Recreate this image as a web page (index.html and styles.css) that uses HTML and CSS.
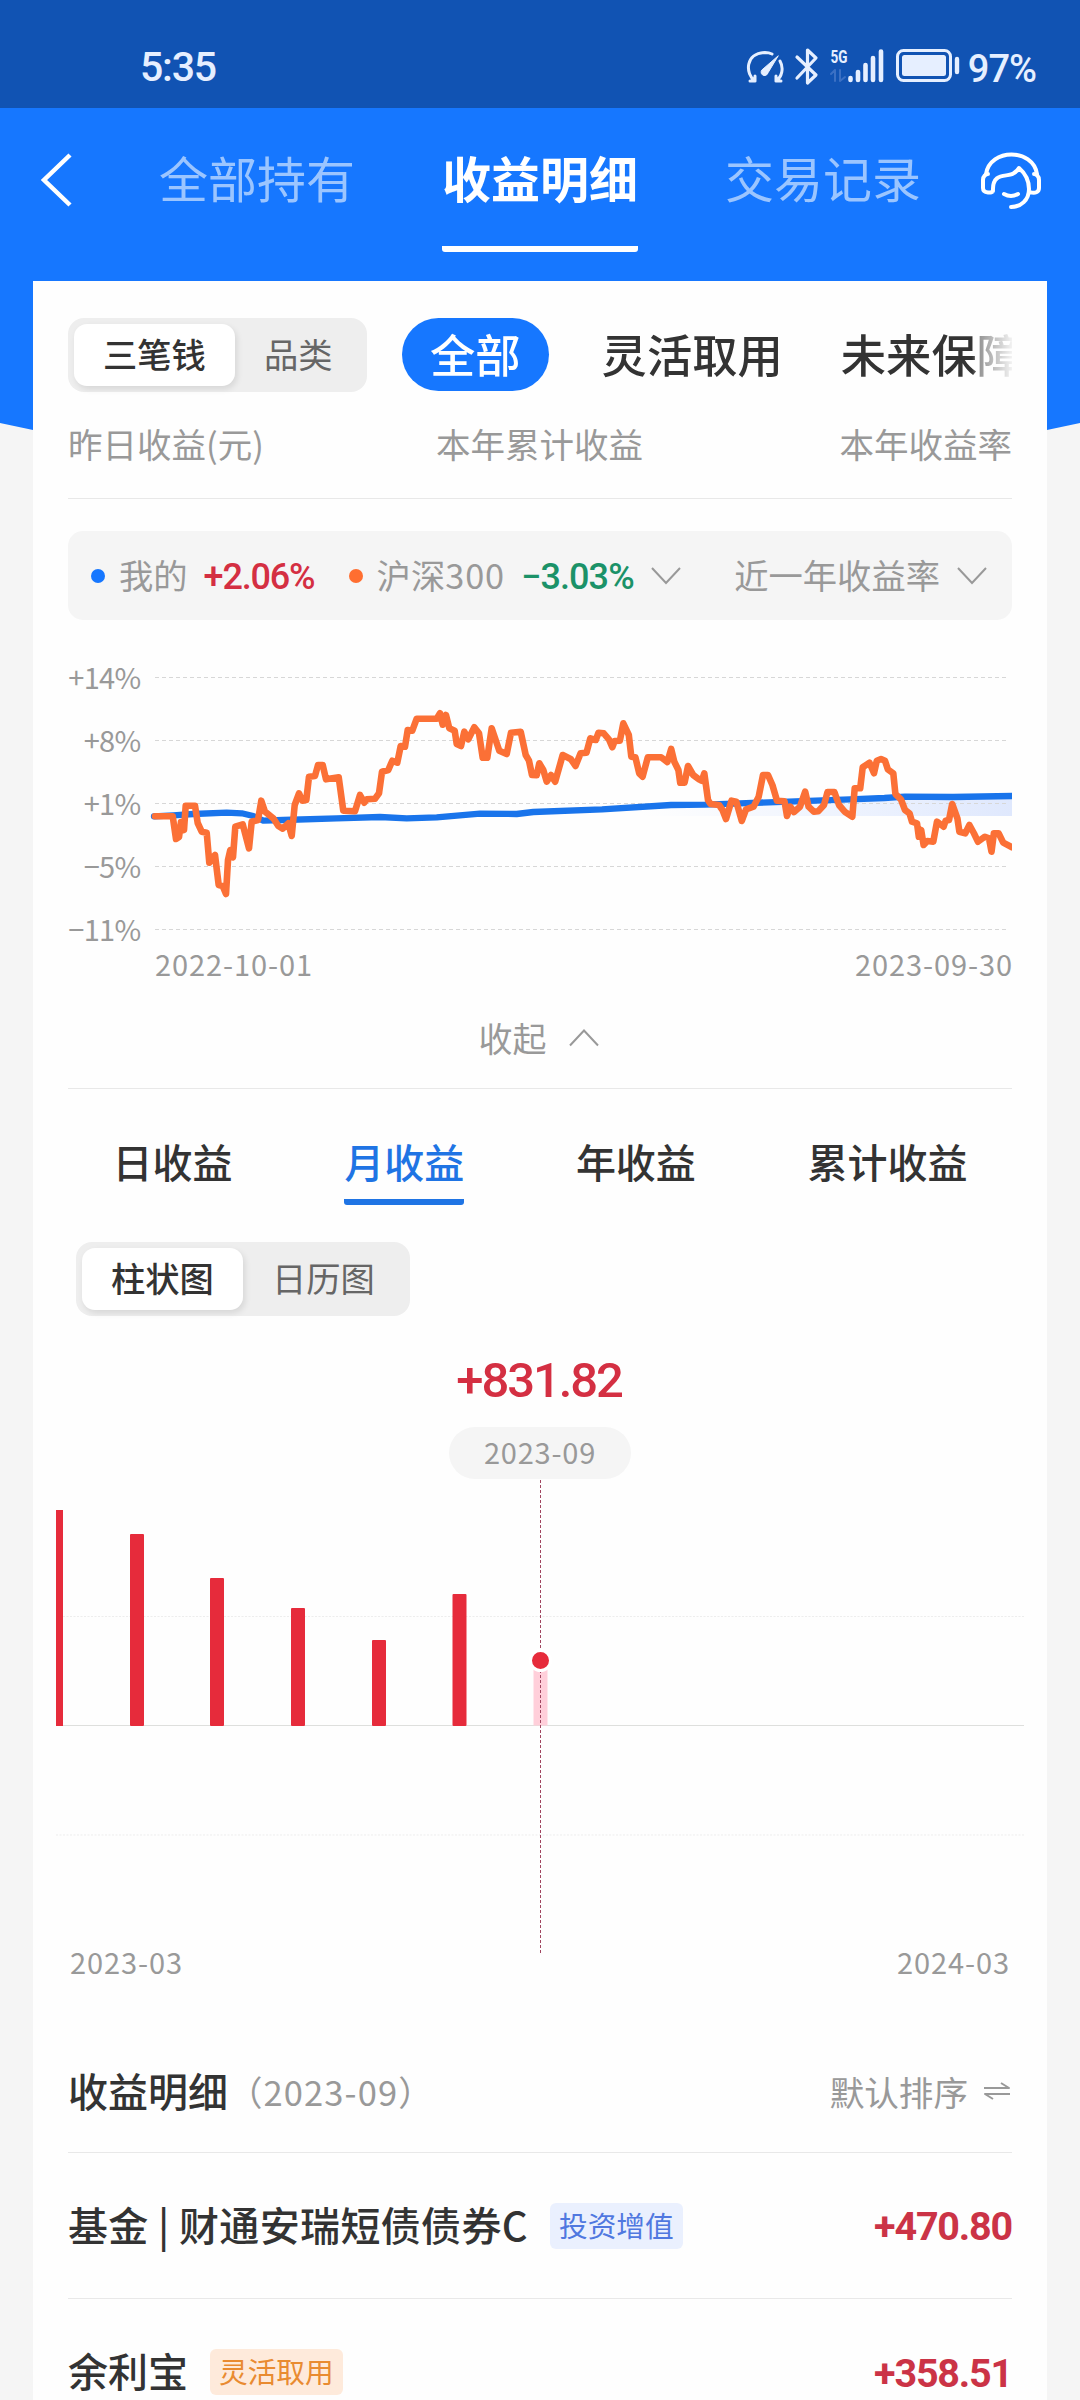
FILE: index.html
```html
<!DOCTYPE html>
<html lang="zh-CN">
<head>
<meta charset="utf-8">
<title>收益明细</title>
<link rel="stylesheet" href="styles.css">
</head>
<body>
<div class="page">
  <header class="top">
    <div class="status">
      <span class="clock">5:35</span>
      <svg class="status-icons" viewBox="740 40 222 50" width="222" height="50" fill="none" stroke="#e6efff" stroke-linecap="round" stroke-linejoin="round">
        <path d="M754 81 C744 74 744 53 764 52.500 C767 52.500 769 53 771 54 M779 61 C783 68 781 77 775 81 M754 81V76 M754 81h-5 M775 81V76 M775 81h5" stroke-width="3"/>
        <path d="M777 56 L762 69 A3.500 3.500 0 1 0 767 73 Z" fill="#e6efff" stroke-width="1"/>
        <path d="M796 57 L815 75 L806.500 83 V50 L815 58 L796 78" stroke-width="3.200"/>
        <text class="net" x="829.500" y="62.500" textLength="17" lengthAdjust="spacingAndGlyphs">5G</text>
        <path d="M830 74 L834 70 V81 M839 70 V81 L844 77" stroke="#3b70c4" stroke-width="2"/>
        <path d="M849.500 78V80 M857 72V80 M864.500 65V80 M872 58V80 M880 51.500V80" stroke-width="4.600"/>
        <rect x="896.500" y="50.500" width="53" height="30" rx="6" stroke-width="3"/>
        <rect x="901" y="55" width="44" height="21" rx="2.500" fill="#e6efff" stroke="none"/>
        <path d="M956 59V72" stroke-width="4.400"/>
      </svg>
      <span class="battery">97%</span>
    </div>
    <nav class="nav">
      <svg class="back" viewBox="0 0 36 60" width="36" height="60"><path d="M34 5 L8 30 L34 55" fill="none" stroke="#fff" stroke-width="4.500"/></svg>
      <div class="nav-tabs">
        <span class="nav-tab">全部持有</span>
        <span class="nav-tab nav-on">收益明细</span>
        <span class="nav-tab">交易记录</span>
      </div>
      <svg class="service" viewBox="978 149 66 62" width="66" height="62" fill="none" stroke="#fff" stroke-width="4" stroke-linecap="round" stroke-linejoin="round">
        <path d="M986 173 C990 147 1033 147 1037 173"/>
        <path d="M993 190 C993 192 983 193 983 187 V179 C983 175 986 173 988 173 M993 190 C992 170 1008 177 1014 172 C1017 170 1018 169 1019 167 C1026 173 1029 180 1029 188 C1029 199 1021 206 1011 206 M1030 191 C1035 193 1039 191 1039 187 V179 C1039 175 1036 173 1034 173"/>
        <path d="M1004 193 Q1011 197 1018 193"/>
      </svg>
    </nav>
  </header>

  <main class="card">
    <div class="filters">
      <div class="segment"><span class="seg seg-on">三笔钱</span><span class="seg">品类</span></div>
      <div class="chips"><span class="chip chip-on">全部</span><span class="chip">灵活取用</span><span class="chip">未来保障</span></div>
    </div>
    <div class="stats"><span>昨日收益(元)</span><span>本年累计收益</span><span>本年收益率</span></div>

    <div class="legend">
      <i class="dot dot-mine"></i><span class="name">我的</span><b class="rate up">+2.06%</b>
      <i class="dot dot-index"></i><span class="name">沪深<span class="wide">300</span></span><b class="rate down">−3.03%</b>
      <svg class="arrow" viewBox="0 0 30 18" width="30" height="18"><path d="M1 1 L15 16 L29 1"/></svg>
      <span class="period">近一年收益率</span>
      <svg class="arrow" viewBox="0 0 30 18" width="30" height="18"><path d="M1 1 L15 16 L29 1"/></svg>
    </div>

    <svg class="trend" viewBox="68 620 944 370" width="944" height="370">
      <defs>
        <linearGradient id="fade" x1="0" x2="1" y1="0" y2="0"><stop offset="0" stop-color="#e3ecff" stop-opacity="0"/><stop offset="1" stop-color="#dfe8fd"/></linearGradient>
      </defs>
      <path d="M640 807 L739 803 L850 799 L905 797 H1012 V816 H640Z" fill="url(#fade)"/>
      <path class="rule" d="M155 677.500H1008 M155 740.500H1008 M155 803.500H1008 M155 866.500H1008 M155 929.500H1008"/>
      <g class="axis" text-anchor="end">
        <text x="140.500" y="689">+14%</text><text x="140.500" y="752">+8%</text><text x="140.500" y="815">+1%</text><text x="140.500" y="878">−5%</text><text x="140.500" y="941">−11%</text>
      </g>
      <g class="axis dates"><text x="155" y="976">2022-10-01</text><text x="1013" y="976" text-anchor="end">2023-09-30</text></g>
      <polyline class="line mine" points="154,816.3 173.300,815.3 193.300,814 226.700,812.7 241.700,813.3 253.300,816 263.300,820.7 283.300,820 336.700,818.3 380,817 406.700,818.3 436.700,817.3 480,813.7 516.700,814 533.300,812 602,809.3 671,805 705,804.7 740,803.3 815.500,800.7 850,799.3 884.400,798 905,796.7 953,797 1012,796"/>
      <polyline class="line index" points="155,816.3 172.7,816.3 176,839 179,837 181,822 184,830 185.7,805.7 195,805.7 197.7,823 201.7,831.7 206.7,832.7 209.3,862.7 215,855 218.7,885 222.7,886 226,894 228,860 230.3,850 233,857.3 235.3,826.7 242.7,824.3 249,848.3 251.7,821.7 258,820 261.3,800.7 265,811.7 273.3,818.3 278.3,826 282.7,828.7 288.3,823.3 291.7,836 294.7,805 299,793.3 302.3,800.7 306.3,800 309,776.7 315,776 318,765 322.7,765 326,779.3 338.7,777.3 343.3,810.7 355,811.3 360,795 364.3,802.7 366.7,799.3 375,798.7 379,793.3 382,771.7 388.3,770 392.3,760.7 397.3,762.7 400.7,746 405,746.7 407.7,730 412.3,730.7 416.7,718.7 436.7,718.7 440,713.3 442.7,724.7 446,715 449.3,728.3 454.7,730.7 456.7,744 461,746 464.3,731.7 468.3,739.3 474.3,727.3 479,733.3 482.7,757.7 487.3,757.7 491.7,728.3 499.3,750.7 506.7,754 511,732.7 520.7,731.7 525.7,755 529,760.7 532,775 536.7,775.3 539.3,763.3 543.3,770 546.7,781.7 551,775 555.2,781.7 562.7,755 571,759.3 575.5,766 580.6,753.3 586.5,752.7 590.3,738.3 595.8,740 598.5,732.7 603.7,733.3 608.9,739.3 612.3,747.3 614.7,741 619.9,740.7 623.3,723.3 628.8,735 631.3,756.7 635.4,757.3 639.2,773.3 642.6,776.7 647.8,757.3 661.2,757.3 667.4,762 671.2,749 674.3,761.7 678.4,770 680.2,782.7 684.6,782.7 688,766 693.2,775 699,779.3 701.8,780.7 704.3,773.3 708,800 710.5,804 719,805 722.5,810 726,819 731.5,800.7 736.3,801.7 741.8,821 746,809.3 753.5,806.7 758.7,796.7 763,775 768,775 772.4,785 777,800.7 784.5,801.3 787,816 790.3,806.7 794,812 800,806.7 805.2,791.7 808.6,806.7 813.8,811.7 818.2,811.3 824,805 827.5,792 834.4,792 839,805 844.7,811.7 852.3,816.7 854.7,788.3 860.2,788.3 862.7,767.3 869.5,762.7 874,773.3 876.8,760.7 881,759 885,760.7 887.8,769.3 893.3,773.3 895.4,794 900.9,799.3 905,810 909.5,813.3 912,821.7 917,823.3 918.8,836.7 921.2,830 923.6,845 927.4,841 933.3,841.7 937,821.7 943.6,826.7 945.6,820.7 949,820 952.2,804 957.4,818.3 959.4,831.7 965.3,833.3 969.4,825 973.9,833.3 978,841.7 984.9,836.7 989,838.3 991.5,851.7 993.9,833.3 998.7,833.3 1003.2,842.7 1012,847.3"/>
    </svg>

    <div class="collapse"><span>收起</span><svg class="arrow" viewBox="0 0 30 18" width="30" height="18"><path d="M1 16.500 L15 1.500 L29 16.500"/></svg></div>

    <div class="tabs"><span class="tab">日收益</span><span class="tab tab-on">月收益</span><span class="tab">年收益</span><span class="tab">累计收益</span></div>
    <div class="segment chart-kind"><span class="seg seg-on">柱状图</span><span class="seg">日历图</span></div>

    <div class="month-value">+831.82</div>
    <div class="month-pill">2023-09</div>
    <svg class="bars" viewBox="33 1479 1014 511" width="1014" height="511">
      <path d="M56 1616.500H1024 M56 1835H1024" stroke="#ededed" stroke-dasharray="2 1.500"/>
      <path d="M56 1725.500H1024" stroke="#dedfdd"/>
      <g fill="#e62b3b">
        <rect x="56" y="1510" width="7" height="216"/>
        <rect x="130" y="1534" width="14" height="192" rx="1"/>
        <rect x="210" y="1578" width="14" height="148" rx="1"/>
        <rect x="291" y="1608" width="14" height="118" rx="1"/>
        <rect x="372" y="1640" width="14" height="86" rx="1"/>
        <rect x="452.500" y="1594" width="14" height="132" rx="1"/>
      </g>
      <rect x="533.500" y="1660" width="14" height="65.500" fill="#ffcfda"/>
      <path d="M540.500 1480V1955" stroke="#a04560" stroke-dasharray="3 2"/>
      <circle cx="540.500" cy="1660.500" r="10" fill="#e62b3b" stroke="#fff" stroke-width="3"/>
      <g class="axis dates"><text x="70" y="1974">2023-03</text><text x="1010" y="1974" text-anchor="end">2024-03</text></g>
    </svg>

    <div class="detail-head">
      <span class="title">收益明细</span><span class="month">（2023-09）</span>
      <span class="sort">默认排序</span>
      <svg class="swap" viewBox="0 0 28 20" width="28" height="20"><path d="M1 7H26L18 2 M27 13H2L10 18"/></svg>
    </div>
    <div class="item"><span class="title fund">基金 | 财通安瑞短债债券C</span><span class="tag tag-blue">投资增值</span><b class="amount">+470.80</b></div>
    <div class="item item-last"><span class="title">余利宝</span><span class="tag tag-orange">灵活取用</span><b class="amount">+358.51</b></div>
  </main>
</div>
</body>
</html>
```
FILE: styles.css
```css
* { box-sizing: border-box; }
html, body { margin: 0; height: 2400px; overflow: hidden; }
body {
  width: 1080px;
  background: #f5f5f5;
  color: #333;
  font-family: "Noto Sans CJK SC", sans-serif;
  white-space: nowrap;
}
.page {
  display: flex;
  flex-direction: column;
  height: 2400px;
  overflow: hidden;
  background: linear-gradient(#1677ff, #1677ff) top / 100% 281px no-repeat;
}
.top { height: 281px; flex: none; }
.page::before {
  content: "";
  order: 1;
  height: 180px;
  margin-bottom: -180px;
  flex: none;
  background: #1677ff;
  clip-path: polygon(0 0, 100% 0, 100% 142px, 1047px 149px, 540px 180px, 33px 149px, 0 142px);
}
.status {
  height: 108px;
  padding: 0 44px 0 140px;
  display: flex;
  align-items: center;
  background: #1153b3;
  color: #e6efff;
  font: 400 40px/1 Roboto, sans-serif;
}
.clock { padding-top: 27px; font-size: 41px; font-weight: 500; letter-spacing: -1.200px; }
.status-icons { margin: 21px 5px 0 auto; }
.net { font: 700 17.500px Roboto, sans-serif; fill: #e6efff; stroke: none; }
.battery { padding-top: 29px; font-size: 38px; font-weight: 500; letter-spacing: -1px; }

.nav { height: 173px; display: flex; padding: 42px 36px 0 36px; }
.nav-tabs { flex: 1; display: flex; gap: 87px; padding-left: 87px; }
.nav-tab { width: 196px; height: 102px; font-size: 49px; line-height: 54px; color: #9bc5ff; }
.nav-on { color: #fff; font-weight: 700; border-bottom: 6px solid #fff; border-radius: 3px; }

.card {
  order: 2;
  position: relative;
  width: 1014px;
  height: 2119px;
  flex: none;
  margin-left: 33px;
  padding: 37px 35px 0;
  overflow: hidden;
  background: #fefefe;
}
.filters { display: flex; height: 73px; }
.segment {
  display: flex;
  height: 74px;
  padding: 6px;
  border-radius: 16px;
  background: #eee;
  font-size: 34.300px;
  line-height: 58px;
  color: #666;
}
.seg { padding: 0 28.500px 0 29px; }
.seg-on {
  width: 161px;
  border-radius: 13px;
  background: #fff;
  color: #333;
  font-weight: 500;
  box-shadow: 2px 3px 6px rgba(0, 0, 0, 0.1);
}
.filters .segment { width: 299px; flex: none; }
.chips {
  flex: 1;
  display: flex;
  margin-left: 35px;
  overflow: hidden;
  font-size: 45.300px;
  font-weight: 500;
  line-height: 71px;
  mask-image: linear-gradient(90deg, #000 570px, rgba(0, 0, 0, 0.5) 578px, transparent 614px);
}
.chip { flex: none; margin-right: 58px; }
.chip-on { margin-right: 53px; padding: 0 28px; border-radius: 37px; background: #1677ff; color: #fff; }
.stats {
  display: grid;
  grid-template-columns: 368px 1fr auto;
  height: 108px;
  border-bottom: 1px solid #e8e8e8;
  font-size: 34.500px;
  line-height: 105px;
  color: #999;
}
.legend {
  display: flex;
  align-items: center;
  height: 89px;
  margin-top: 32px;
  padding: 0 25px 0 23px;
  border-radius: 15px;
  background: #f5f5f5;
  color: #999;
  font-size: 34.300px;
  line-height: 86px;
}
.name { margin-left: 14px; padding-bottom: 3px; }
.wide { letter-spacing: 0.900px; }
.period { margin-left: auto; padding-bottom: 3px; }
.dot { width: 14px; height: 14px; border-radius: 50%; }
.dot-mine { background: #1677ff; }
.dot-index { margin-left: 36px; background: #ff6e30; }
.rate {
  width: 109px;
  margin-left: 16px;
  font: 500 36px/89px Roboto, sans-serif;
  letter-spacing: -1.200px;
  padding-top: 3px;
}
.up { color: #d42f42; }
.down { color: #1b9268; letter-spacing: -0.900px; }
.arrow { fill: none; stroke: #999; stroke-width: 2; }
.rate + .arrow { margin-left: 21px; }
.period + .arrow { margin-left: 17px; }

.trend { display: block; overflow: hidden; }
.rule { stroke: #d7d7d7; stroke-width: 1; stroke-dasharray: 4 3; }
.axis { font-size: 29px; fill: #999; letter-spacing: -0.700px; }
.dates { letter-spacing: 0.900px; }
.line { fill: none; stroke-linecap: round; stroke-linejoin: round; stroke-width: 6.600; }
.mine { stroke: #1974eb; stroke-width: 6.300; }
.index { stroke: #fb7036; }

.collapse {
  display: flex;
  align-items: center;
  justify-content: center;
  gap: 22px;
  height: 99px;
  padding: 0 3px 2px 0;
  border-bottom: 1px solid #e8e8e8;
  color: #999;
  font-size: 34px;
  line-height: 92px;
}
.tabs {
  display: flex;
  gap: 111.700px;
  height: 153px;
  padding: 43px 0 0 44.500px;
  font-size: 40px;
  font-weight: 500;
  line-height: 58px;
}
.tab { height: 73px; }
.tab-on { color: #1f74e4; border-bottom: 6px solid #1f74e4; border-radius: 3px; }
.chart-kind { width: 334px; margin-left: 8px; }
.month-value {
  height: 111px;
  padding: 36px 2px 0 0;
  text-align: center;
  color: #d42f42;
  font: 500 49px/58px Roboto, sans-serif;
  letter-spacing: -2.100px;
}
.month-pill {
  width: 182px;
  height: 52px;
  margin: 0 auto;
  border-radius: 26px;
  background: #f5f5f5;
  color: #999;
  font-size: 29px;
  line-height: 49px;
  letter-spacing: 0.800px;
  text-align: center;
}
.bars { display: block; margin: 0 -35px; }
.detail-head, .item { display: flex; align-items: center; border-bottom: 1px solid #e8e8e8; }
.detail-head { height: 121px; margin-top: 42px; padding-bottom: 4px; }
.title { font-size: 40px; font-weight: 500; line-height: 58px; }
.fund { letter-spacing: 0.350px; }
.month { padding-top: 2px; font-size: 34.500px; letter-spacing: 1.100px; color: #999; }
.sort { margin-left: auto; padding-top: 2px; font-size: 34.600px; color: #999; }
.swap { margin: 2px 1px 0 15px; fill: none; stroke: #999; stroke-width: 2; stroke-linejoin: round; }
.item { height: 146px; padding-bottom: 4px; }
.item-last { border: 0; }
.tag {
  height: 46px;
  margin: 4px 0 0 22px;
  padding: 0 9px;
  border-radius: 6px;
  font-size: 28.700px;
  line-height: 43px;
}
.tag-blue { background: #eaf0fe; color: #5078e0; }
.tag-orange { background: #feeadb; color: #e98b31; }
.amount { margin-left: auto; padding-top: 7px; color: #cb3346; font: 700 39.500px/58px Roboto, sans-serif; letter-spacing: -1.200px; }
```
